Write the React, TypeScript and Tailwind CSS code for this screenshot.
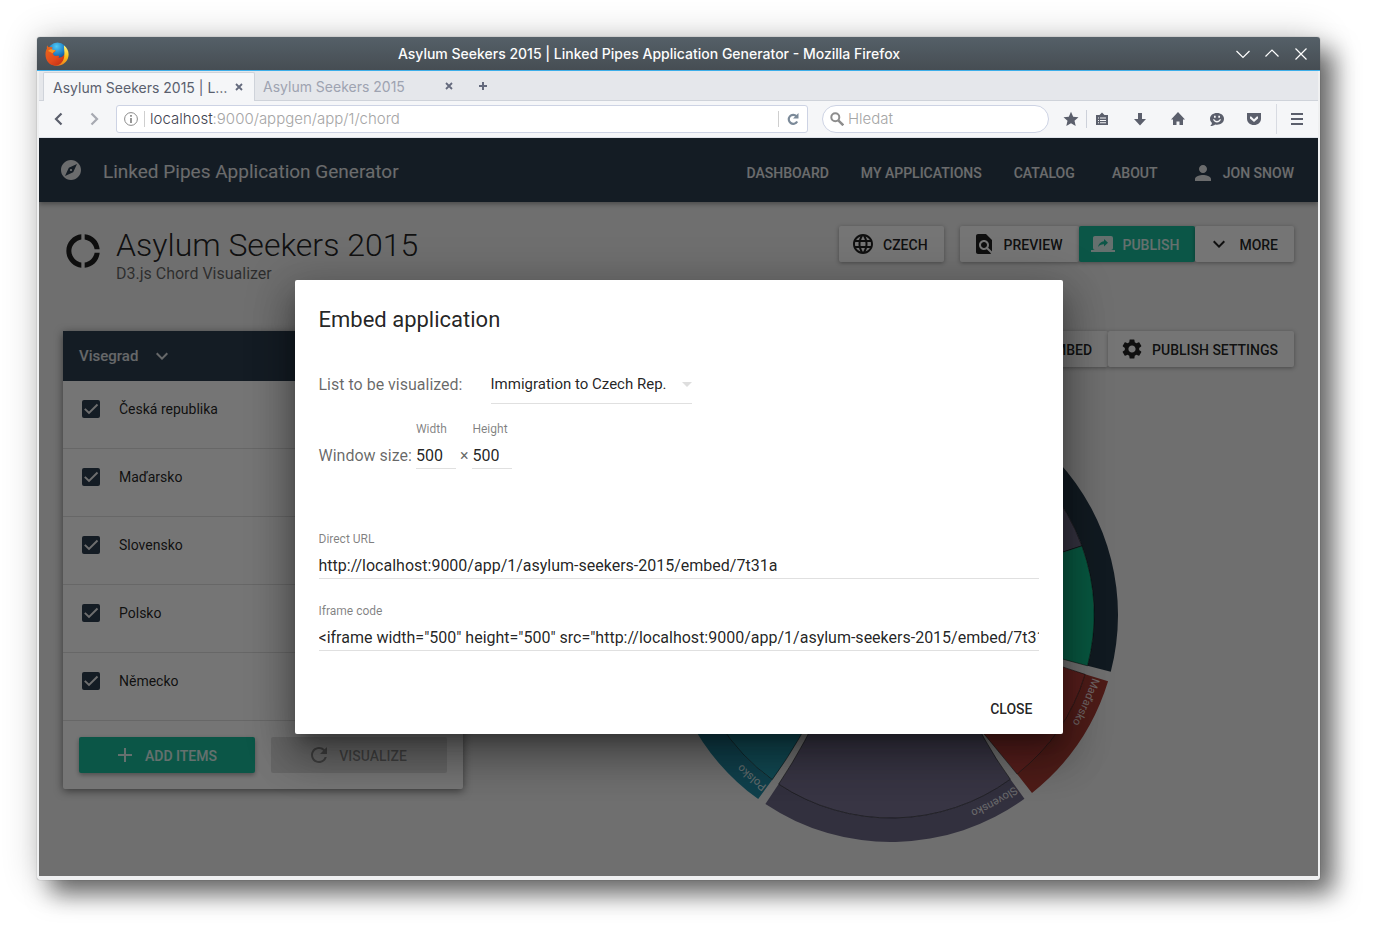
import React, { useState } from 'react';
import {
  MdAdd,
  MdCode,
  MdDonutLarge,
  MdExpandMore,
  MdExplore,
  MdFindInPage,
  MdLanguage,
  MdPerson,
  MdRefresh,
  MdScreenShare,
  MdSettings,
} from 'react-icons/md';

/* ---------- Browser chrome ---------- */

function FirefoxLogo() {
  return (
    <svg viewBox="0 0 24 24" className="size-6" aria-hidden="true">
      <defs>
        <radialGradient id="globe" cx="0.45" cy="0.2" r="0.8">
          <stop offset="0" stopColor="#4fc9f5" />
          <stop offset="0.5" stopColor="#1f7fc4" />
          <stop offset="1" stopColor="#0b2a66" />
        </radialGradient>
        <linearGradient id="fox" x1="0.1" y1="0.1" x2="0.8" y2="1">
          <stop offset="0" stopColor="#e8641b" />
          <stop offset="0.6" stopColor="#e24a1c" />
          <stop offset="1" stopColor="#c62f16" />
        </linearGradient>
        <linearGradient id="tail" x1="0.5" y1="0" x2="0.4" y2="1">
          <stop offset="0" stopColor="#fff27a" />
          <stop offset="0.5" stopColor="#fbc21c" />
          <stop offset="1" stopColor="#ee7a1b" />
        </linearGradient>
      </defs>
      <circle cx="12.5" cy="10.500" r="10" fill="url(#globe)" />
      <path d="M19 3.500c3.600 2.500 5.200 6.800 4.400 11-1 5.200-5.600 9.200-11 9.200-3.500 0-6-1.500-6-1.500l5-4.200c5 .8 8-3 8-7 0-3-.6-5.500-.4-7.500z" fill="url(#tail)" />
      <path d="M2.200 3.200c.3 1 .8 1.600 1.600 2 1.300-.5 2.700-.4 4 .2-.8.700-1 1.500-.9 2.300.9.500 2 .5 3.600.6.300.900-.5 1.700-1.700 2.300-1 .6-.9 1.800 0 2.600 1.700 1.500 3.600.1 5.100.6.500.5.200 1.300-.6 2 2.500-.1 4.600-1.100 6-3.300.3 6-3.800 11.200-9.200 11.200C4.500 23.700.5 18.700.500 12.600c0-2.800.6-4.500 1.400-6-.200-1.200-.1-2.400.3-3.400z" fill="url(#fox)" />
      <path d="M3 9c1.500-2 3.500-2.200 4.500-1.500 1 .6 2 .6 3 .8-.2 1.200-2.500 1.400-2.800 2.900C6 10.500 4.500 9.500 3 9z" fill="#f59a25" />
    </svg>
  );
}

function TitleBar() {
  const control = 'flex size-4 items-center justify-center text-white';
  return (
    <div className="flex h-[34px] items-center rounded-t-[3px] border-b border-[#3daee9] bg-linear-to-b from-[#556068] to-[#464d53] px-2">
      <div className="w-[26px]">
        <FirefoxLogo />
      </div>
      <h2 className="flex-1 truncate text-center font-[Inter] text-sm font-medium text-[#fcfcfc]">
        Asylum Seekers 2015 | Linked Pipes Application Generator - Mozilla Firefox
      </h2>
      <div className="flex w-[85px] justify-between pr-[3px] pl-2">
        <button className={control} aria-label="Minimize">
          <svg viewBox="0 0 16 16" className="size-4" fill="none" stroke="currentColor" strokeWidth="1.2"><path d="M1.500 5 8 11.500 14.500 5" /></svg>
        </button>
        <button className={control} aria-label="Maximize">
          <svg viewBox="0 0 16 16" className="size-4" fill="none" stroke="currentColor" strokeWidth="1.2"><path d="M1.500 10.500 8 4l6.500 6.500" /></svg>
        </button>
        <button className={control} aria-label="Close window">
          <svg viewBox="0 0 16 16" className="size-4" fill="none" stroke="currentColor" strokeWidth="1.2"><path d="m2.500 2.500 11 11M13.500 2.500l-11 11" /></svg>
        </button>
      </div>
    </div>
  );
}

function TabClose() {
  return (
    <button aria-label="Close tab" className="flex size-4 items-center justify-center text-[#646a7d]">
      <svg viewBox="0 0 8 8" className="size-2" fill="none" stroke="currentColor" strokeWidth="1.800"><path d="m1 1 6 6M7 1 1 7" /></svg>
    </button>
  );
}

function TabBar() {
  return (
    <div className="flex h-[30px] items-end border-b border-[#cfd3da] bg-[#e5e7eb] pl-1 font-[Inter] text-sm">
      <div className="-mb-px flex h-[29px] w-[212px] items-center justify-between rounded-t-[2px] border border-b-0 border-[#cfd3da] bg-[#f5f6f8] pr-[7px] pl-[9px] text-[#5a5f6e]">
        <span className="pt-0.5">Asylum Seekers 2015 | L…</span>
        <TabClose />
      </div>
      <div className="flex h-[29px] w-[202px] items-center justify-between pl-2 text-[#9ea3b1]">
        <span className="pt-0.5">Asylum Seekers 2015</span>
        <TabClose />
      </div>
      <button aria-label="New tab" className="ml-[18px] flex h-[29px] w-4 items-center justify-center text-[#646a7d]">
        <svg viewBox="0 0 10 10" className="size-2.5" fill="none" stroke="currentColor" strokeWidth="2"><path d="M5 1v8M1 5h8" /></svg>
      </button>
    </div>
  );
}

function ToolButton({ label, children }: { label: string; children: React.ReactNode }) {
  return (
    <button aria-label={label} className="flex size-4 shrink-0 items-center justify-center text-[#5b5f6c]">
      <svg viewBox="0 0 16 16" className="size-4" fill="currentColor">{children}</svg>
    </button>
  );
}

function NavBar() {
  return (
    <div className="flex h-[37px] items-center border-b border-[#dfe3ea] bg-[#f5f6f8] pr-[13px] pl-3 font-[Inter] text-[15px] font-light">
      <ToolButton label="Back"><path d="M10.500 2.500 5 8l5.500 5.500" fill="none" stroke="currentColor" strokeWidth="2.200" /></ToolButton>
      <span className="ml-[19px] flex opacity-50">
        <ToolButton label="Forward"><path d="M5.500 2.500 11 8l-5.500 5.500" fill="none" stroke="currentColor" strokeWidth="2.200" /></ToolButton>
      </span>
      <div className="ml-[14px] flex h-7 flex-1 items-center rounded-[3px] border border-[#cdd3e4] bg-white pl-[7px]">
        <svg viewBox="0 0 14 14" className="size-3.5" fill="none" stroke="#8b8b8b">
          <circle cx="7" cy="7" r="6.400" />
          <path d="M7 6v5M7 3v1.800" strokeWidth="1.800" />
        </svg>
        <span className="mr-[5px] ml-1.5 h-4 w-px bg-[#cfcfcf]" />
        <span className="flex-1 pt-px text-[#a5a5a5]"><span className="text-[#3f4350]">localhost</span>:9000/appgen/app/1/chord</span>
        <span className="h-4 w-px bg-[#cfcfcf]" />
        <button aria-label="Reload" className="flex h-full w-7 items-center justify-center">
          <svg viewBox="0 0 14 14" className="size-3.5" fill="none" stroke="#7b8a99" strokeWidth="2.200">
            <path d="M10.500 4.200A4.500 4.500 0 1 0 11.200 9.500" />
            <path d="M12.500 1v5.500H7z" fill="#7b8a99" stroke="none" />
          </svg>
        </button>
      </div>
      <label className="ml-[14px] flex h-7 w-[227px] items-center gap-1 rounded-full border border-[#cdd3e4] bg-white pl-[7px]">
        <svg viewBox="0 0 14 14" className="size-3.5 shrink-0" fill="none" stroke="#8d8d8d" strokeWidth="2">
          <circle cx="5.300" cy="5.300" r="4" />
          <path d="m8.300 8.300 5 5" strokeWidth="2.500" />
        </svg>
        <input aria-label="Search" placeholder="Hledat" className="w-full min-w-0 bg-transparent pt-px outline-none placeholder:text-[#a5a5a5]" />
      </label>
      <div className="ml-[14px] flex items-center">
        <ToolButton label="Bookmark"><path d="m8 .8 2.200 4.900 5.300.5-4 3.500 1.200 5.300L8 12.200 3.300 15l1.200-5.300-4-3.500 5.300-.5z" /></ToolButton>
        <span className="mr-[7px] ml-[7px] h-[18px] w-px bg-[#cdd1da]" />
        <ToolButton label="Reading list"><path fillRule="evenodd" d="M8 1.500 10.500 4H14v10H2V4h3.500zM4 6.500v1h1v-1zm2 0v1h6v-1zM4 9v1h1V9zm2 0v1h6V9zm-2 2.300v1h1v-1zm2 0v1h6v-1z" /></ToolButton>
        <span className="ml-[22px] flex"><ToolButton label="Downloads"><path d="M6 2h4v6h4l-6 6.500L2 8h4z" /></ToolButton></span>
        <span className="ml-[22px] flex"><ToolButton label="Home"><path d="M8 1 15 8.500h-2V14H9.500v-3.500h-3V14H3V8.500H1L5 4.200z" /></ToolButton></span>
        <span className="ml-[23px] flex"><ToolButton label="Chat"><path fillRule="evenodd" d="M8 2c4 0 7 2.300 7 5.800s-3 5.900-7 5.900c-.7 0-1.300 0-1.900-.2-1.200 1-2.800 1.600-4.800 1.500 1-.9 1.600-1.900 1.700-3C1.700 11 1 9.500 1 7.800 1 4.300 4 2 8 2zM5 4.800v2h1.700v-2zm4.300 0v2H11v-2zM4 8.300c.5 2 2 3.200 4 3.200s3.500-1.200 4-3.200h-1.300c-.5 1-1.400 1.700-2.700 1.700s-2.200-.7-2.700-1.700z" /></ToolButton></span>
        <span className="ml-[21px] flex"><ToolButton label="Save to Pocket"><path fillRule="evenodd" d="M1 2h14v5.500C15 11.500 12 14 8 14s-7-2.500-7-6.500zm3 3.500v2L8 11l4-3.500v-2h-1.200L8 8.200 5.200 5.500z" /></ToolButton></span>
        <span className="ml-[14px] h-[30px] w-px bg-[#d8dbe2]" />
        <span className="ml-[12px] flex"><ToolButton label="Open menu"><path d="M2 2h12v2H2zm0 5h12v2H2zm0 5h12v2H2z" /></ToolButton></span>
      </div>
    </div>
  );
}

/* ---------- Application ---------- */

function NavLink({ children }: { children: string }) {
  return (
    <a href="#" className="min-w-[88px] px-4 text-center">{children}</a>
  );
}

function AppHeader() {
  return (
    <header className="relative flex h-16 shrink-0 items-center bg-[#2c3e50] pr-2 pl-5 text-white/90 shadow-[0_2px_5px_rgba(0,0,0,0.35)]">
      <MdExplore className="size-6" />
      <h2 className="ml-5 flex-1 pt-1 text-[19px]">Linked Pipes Application Generator</h2>
      <nav className="flex items-center pt-1.5 text-sm font-medium">
        <NavLink>DASHBOARD</NavLink>
        <NavLink>MY APPLICATIONS</NavLink>
        <NavLink>CATALOG</NavLink>
        <NavLink>ABOUT</NavLink>
        <button className="flex items-center gap-2 pr-4 pl-3">
          <MdPerson className="size-6" />
          JON SNOW
        </button>
      </nav>
    </header>
  );
}

type ActionProps = { icon: React.ReactNode; children: string; primary?: boolean };

function Action({ icon, children, primary }: ActionProps) {
  return (
    <button
      className={
        'flex h-9 items-center gap-2 rounded-[2px] pr-4 pl-3 text-sm font-medium shadow-[0_1px_4px_rgba(0,0,0,0.35)] ' +
        (primary ? 'bg-[#1abc9c] text-white/85' : 'bg-white text-black/87')
      }
    >
      {icon}
      <span className="pt-0.5">{children}</span>
    </button>
  );
}

const countries = ['Česká republika', 'Maďarsko', 'Slovensko', 'Polsko', 'Německo'];

function ListPanel() {
  return (
    <section className="w-[400px] shrink-0 self-start rounded-[2px] bg-white shadow-[0_2px_8px_rgba(0,0,0,0.5)]">
      <button className="flex h-[50px] w-full items-center gap-3 bg-[#2c3e50] px-4 text-[15px] font-medium text-white/85">
        Visegrad
        <MdExpandMore className="size-6" />
      </button>
      <ul>
        {countries.map((name) => (
          <li key={name} className="h-[68px] border-b border-black/12 px-[19px] pt-[18px]">
            <label className="flex items-center gap-[19px] text-sm text-black/87">
              <span className="grid size-[18px]">
                <input
                  type="checkbox"
                  defaultChecked
                  className="col-start-1 row-start-1 size-[18px] appearance-none rounded-[2px] bg-[#2c3e50]"
                />
                <svg viewBox="0 0 18 18" className="pointer-events-none col-start-1 row-start-1 size-[18px]" fill="none" stroke="#f0f0f0" strokeWidth="1.900">
                  <path d="m2.800 8.800 4.200 4.200 8.500-8.500" />
                </svg>
              </span>
              {name}
            </label>
          </li>
        ))}
      </ul>
      <div className="flex gap-4 p-4 text-sm font-medium">
        <button className="flex h-9 flex-1 items-center justify-center gap-2 rounded-[2px] bg-[#1abc9c] pr-4 pl-3 text-white/85 shadow-[0_2px_5px_rgba(0,0,0,0.35)]">
          <MdAdd className="size-6" />
          <span className="pt-0.5">ADD ITEMS</span>
        </button>
        <button disabled className="flex h-9 flex-1 items-center justify-center gap-2 rounded-[2px] bg-black/12 pr-4 pl-3 text-black/38">
          <MdRefresh className="size-6" />
          <span className="pt-0.5">VISUALIZE</span>
        </button>
      </div>
    </section>
  );
}

/* ---------- Chord chart ---------- */

const OUTER = 227;
const INNER = 203;
const LABEL = 211;

function point(radius: number, degrees: number) {
  const a = (degrees * Math.PI) / 180;
  return `${(radius * Math.cos(a)).toFixed(2)} ${(radius * Math.sin(a)).toFixed(2)}`;
}

function ring(from: number, to: number) {
  const large = to - from > 180 ? 1 : 0;
  return `M${point(OUTER, from)}A${OUTER} ${OUTER} 0 ${large} 1 ${point(OUTER, to)}L${point(INNER, to)}A${INNER} ${INNER} 0 ${large} 0 ${point(INNER, from)}Z`;
}

function ribbon(a1: number, a2: number, b1: number, b2: number) {
  return `M${point(INNER, a1)}A${INNER} ${INNER} 0 0 1 ${point(INNER, a2)}Q0 0 ${point(INNER, b1)}A${INNER} ${INNER} 0 0 1 ${point(INNER, b2)}Q0 0 ${point(INNER, a1)}Z`;
}

const groups = [
  { id: 'cz', name: 'Česká republika', from: -100, to: 14.5, color: '#273948' },
  { id: 'hu', name: 'Maďarsko', from: 17, to: 51.6, color: '#aa3d36' },
  { id: 'sk', name: 'Slovensko', from: 54, to: 123.6, color: '#6d6987' },
  { id: 'pl', name: 'Polsko', from: 125.8, to: 180, color: '#238da5' },
  { id: 'de', name: 'Německo', from: 182.3, to: 257.7, color: '#12b886' },
];

const ribbons = [
  { d: ribbon(-60, -19.9, 190, 200), color: '#716d8a' },
  { d: ribbon(-19.9, 14.5, 205, 240), color: '#12be8c' },
  { d: ribbon(17, 51.6, 215, 245), color: '#bd433d' },
  { d: ribbon(125.8, 170, 250, 256), color: '#279db4' },
  { d: ribbon(54, 123.6, 260, 300), color: '#7a7594' },
];

function ChordChart() {
  return (
    <svg viewBox="-227 -227 454 454" className="mx-auto mt-[21px] block size-[454px]" role="img" aria-label="Chord diagram">
      {groups.map((g) => (
        <g key={g.id}>
          <path d={ring(g.from, g.to)} fill={g.color} />
          <path id={g.id} d={`M${point(LABEL, g.from)}A${LABEL} ${LABEL} 0 0 1 ${point(LABEL, g.to)}`} fill="none" />
          <text className="text-[11px]" fill="#fff" fillOpacity="0.850">
            <textPath href={`#${g.id}`} startOffset="1">{g.name}</textPath>
          </text>
        </g>
      ))}
      {ribbons.map((r) => (
        <path key={r.d} d={r.d} fill={r.color} stroke="#000" strokeOpacity="0.700" strokeWidth="0.700" />
      ))}
    </svg>
  );
}

/* ---------- Embed dialog ---------- */

type FieldProps = { id: string; label: string; value: string; onChange?: (v: string) => void; className: string };

function Field({ id, label, value, onChange, className }: FieldProps) {
  return (
    <div className={className}>
      <label htmlFor={id} className="block text-xs text-black/50">{label}</label>
      <input
        id={id}
        value={value}
        readOnly={!onChange}
        onChange={(e) => onChange?.(e.target.value)}
        className="mt-1.5 block h-[26px] w-full border-b border-black/12 text-base text-black/87 outline-none"
      />
    </div>
  );
}

function EmbedDialog() {
  const [width, setWidth] = useState('500');
  const [height, setHeight] = useState('500');
  const url = 'http://localhost:9000/app/1/asylum-seekers-2015/embed/7t31a';
  return (
    <div
      role="dialog"
      aria-label="Embed application"
      className="w-3xl max-w-full rounded-[2px] bg-white px-6 text-black/87 shadow-[0_11px_15px_-7px_rgba(0,0,0,0.3),0_24px_38px_3px_rgba(0,0,0,0.25),0_9px_46px_8px_rgba(0,0,0,0.2)]"
    >
      <h3 className="pt-6 text-[22px] leading-8">Embed application</h3>
      <div className="mt-[30px] flex h-[38px] items-stretch">
        <label htmlFor="list" className="w-[172px] pt-[7px] text-base text-black/60">List to be visualized:</label>
        <div className="grid w-[201px] border-b border-black/12">
          <select id="list" className="col-start-1 row-start-1 appearance-none bg-transparent text-[15px] outline-none">
            <option>Immigration to Czech Rep.</option>
          </select>
          <svg viewBox="0 0 10 5" className="pointer-events-none col-start-1 row-start-1 h-[5px] w-2.5 self-center justify-self-end" fill="#dedede"><path d="M0 0h10L5 5z" /></svg>
        </div>
      </div>
      <div className="mt-[17px] flex items-end gap-1 text-base text-black/60">
        <span className="pb-px">Window size:</span>
        <Field id="width" label="Width" value={width} onChange={setWidth} className="w-10" />
        <span className="pb-px">×</span>
        <Field id="height" label="Height" value={height} onChange={setHeight} className="w-10" />
      </div>
      <Field id="url" label="Direct URL" value={url} className="mt-[62px]" />
      <Field
        id="code"
        label="Iframe code"
        value={`<iframe width="${width}" height="${height}" src="${url}"></iframe>`}
        className="mt-6"
      />
      <div className="mt-[39px] flex justify-end pb-2">
        <button className="h-9 px-1.5 pt-0.5 text-sm font-medium">CLOSE</button>
      </div>
    </div>
  );
}

export default function App() {
  return (
    <div className="flex min-h-screen bg-white pt-[37px] pr-[61px] pb-[61px] pl-[37px] font-[Roboto,sans-serif]">
      <div className="flex min-w-0 flex-1 flex-col rounded-[3px] bg-[#eff0f1] shadow-[0_0_1px_rgba(0,0,0,0.5),0_0_36px_rgba(0,0,0,0.2),14px_14px_24px_rgba(0,0,0,0.55)]">
        <TitleBar />
        <div className="mx-0.5 mb-1 flex flex-1 flex-col">
          <TabBar />
          <NavBar />
          <div className="relative flex flex-1 flex-col overflow-hidden bg-[#f1f1f1]">
            <AppHeader />
            <main className="px-6 pt-6">
              <div className="mb-[47px] flex items-start">
                <MdDonutLarge className="mt-[5px] size-10 text-black/87" />
                <div className="ml-[13px] flex-1">
                  <h1 className="text-[32px] leading-[38px] font-light text-black/87">Asylum Seekers 2015</h1>
                  <p className="text-base leading-5 text-black/60">D3.js Chord Visualizer</p>
                </div>
                <Action icon={<MdLanguage className="size-6" />}>CZECH</Action>
                <div className="ml-4 flex">
                  <Action icon={<MdFindInPage className="size-6" />}>PREVIEW</Action>
                  <Action primary icon={<MdScreenShare className="size-6" />}>PUBLISH</Action>
                  <Action icon={<MdExpandMore className="size-6" />}>MORE</Action>
                </div>
              </div>
              <div className="flex gap-6">
                <ListPanel />
                <div className="min-w-0 flex-1">
                  <div className="flex justify-end">
                    <Action icon={<MdCode className="size-6" />}>EMBED</Action>
                    <Action icon={<MdSettings className="size-6" />}>PUBLISH SETTINGS</Action>
                  </div>
                  <ChordChart />
                </div>
              </div>
            </main>
            <div className="absolute inset-0 flex items-center justify-center bg-black/54">
              <EmbedDialog />
            </div>
          </div>
        </div>
      </div>
    </div>
  );
}
